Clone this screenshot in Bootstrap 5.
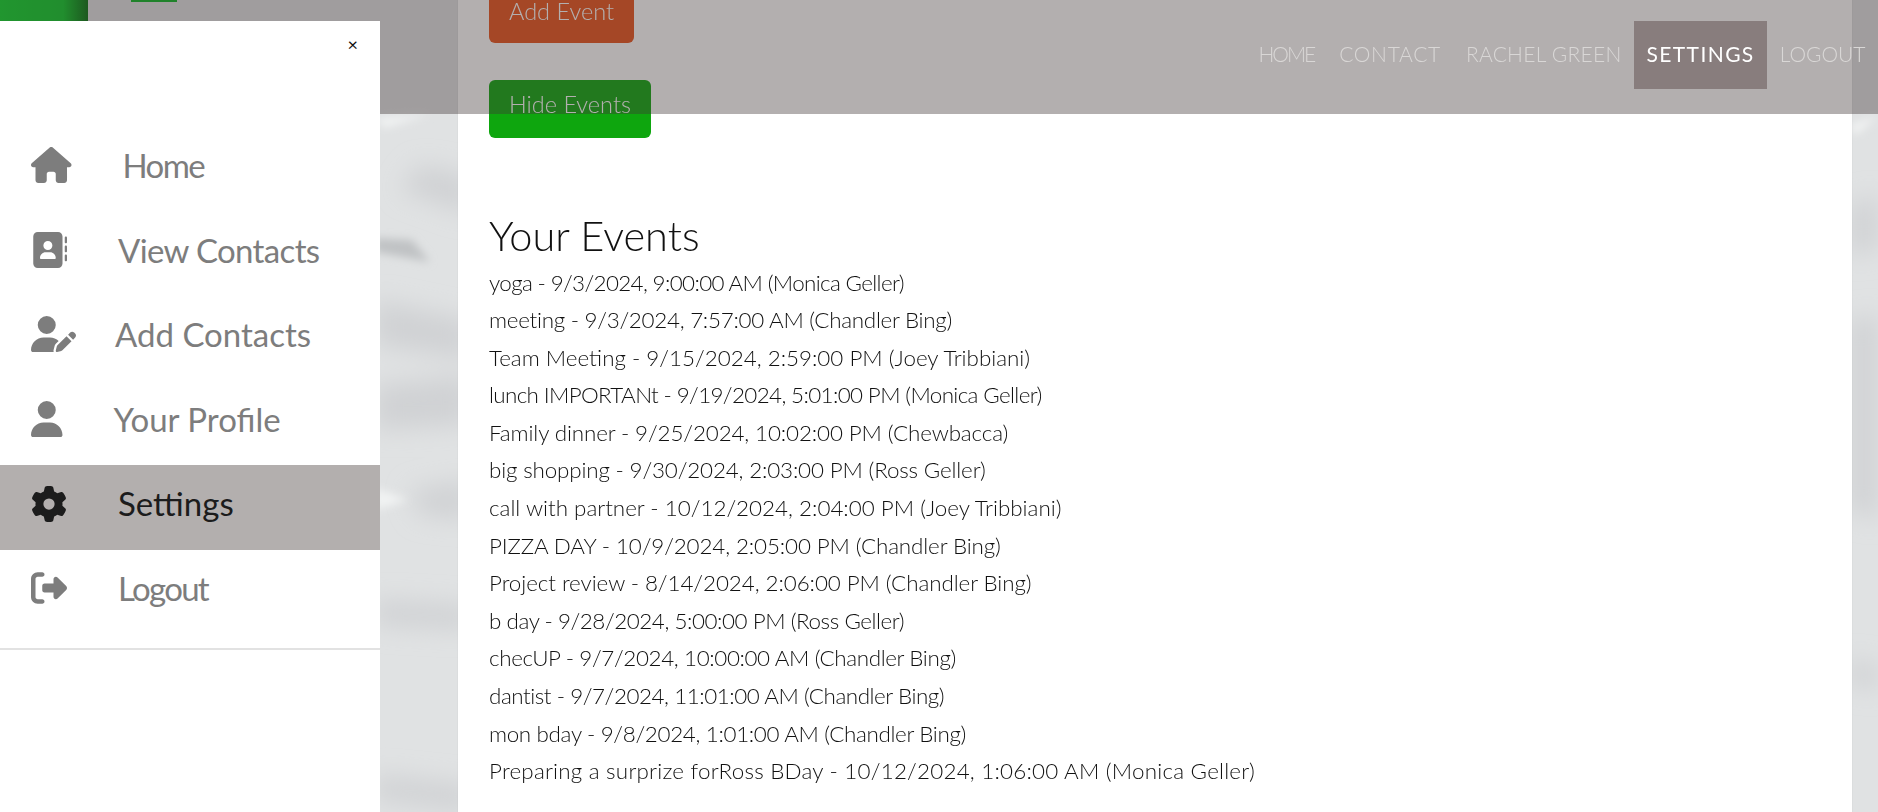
<!DOCTYPE html>
<html lang="en">
<head>
  <meta charset="UTF-8">
  <meta name="viewport" content="width=device-width, initial-scale=1.0">
  <title>Your Events</title>
  <link href="https://cdn.jsdelivr.net/npm/bootstrap@5.3.0/dist/css/bootstrap.min.css" rel="stylesheet">
  <style>
    html, body { height: 100%; overflow: hidden; }
    body {
      font-family: "Lato", "Liberation Sans", sans-serif;
      font-weight: 300;
      background: #e0e2e3;
      color: #111;
    }
    .paper { position: fixed; inset: 0; width: 100%; height: 100%; z-index: 0; }
    .green-patch { position: fixed; top: 0; z-index: 0; }
    .green-a { left: 0; width: 88px; height: 30px; background: linear-gradient(90deg, #0cd52a 0, #0cc828 72%, #067010 100%); }
    .green-b { left: 131px; width: 46px; height: 2px; background: #0bb524; }

    /* page column, scrolled a little */
    .page-col { position: relative; z-index: 1; margin-left: 458px; margin-right: 26px; margin-top: -15px; height: calc(100vh + 15px); overflow: hidden; background: #fff; padding: 0 31px; box-shadow: 0 0 1px rgba(0, 0, 0, .12); }
    .btn-add, .btn-hide { display: block; height: 58px; font-size: 23.5px; font-weight: 300; color: #fff; border: 0; border-radius: 6px; padding: 0 0 9px; }
    .btn-add { background: #e8531c; width: 145px; margin-bottom: 37px; padding-bottom: 5px; }
    .btn-hide { background: #0ea60e; width: 162px; }
    .btn-add:hover { background: #e8531c; color: #fff; }
    .btn-hide:hover { background: #0ea60e; color: #fff; }
    .events-title { font-size: 41.5px; font-weight: 300; line-height: 48px; margin: 73px 0 0; }
    .event-list { margin: 4.5px 0 0; padding: 0; list-style: none; }
    .event-list li { font-size: 22.4px; line-height: 37.6px; white-space: nowrap; }
    .event-list li:nth-child(1) { letter-spacing: -.64px; }
    .event-list li:nth-child(2) { letter-spacing: -.27px; }
    .event-list li:nth-child(4) { letter-spacing: -.63px; }
    .event-list li:nth-child(5) { letter-spacing: -.12px; }
    .event-list li:nth-child(6) { letter-spacing: -.16px; }
    .event-list li:nth-child(8) { letter-spacing: -.12px; }
    .event-list li:nth-child(9) { letter-spacing: -.07px; }
    .event-list li:nth-child(10) { letter-spacing: -.44px; }
    .event-list li:nth-child(11) { letter-spacing: -.37px; }
    .event-list li:nth-child(12) { letter-spacing: -.44px; }
    .event-list li:nth-child(13) { letter-spacing: -.33px; }
    .event-list li:nth-child(14) { letter-spacing: .22px; }

    /* top bar */
    .top-bar { position: fixed; top: 0; left: 0; right: 0; height: 114px; background: rgba(65, 55, 55, .4); z-index: 5; padding: 21px 0 0; justify-content: flex-end; align-items: flex-start; }
    .top-bar .nav-link { height: 68px; line-height: 66px; padding: 0 12.5px; font-size: 21px; color: #d9d7d6; text-transform: uppercase; white-space: nowrap; }
    .top-bar .nav-link.active { background: #887d7d; color: #fff; font-weight: 400; letter-spacing: 1.4px; }
    .top-bar .nav-home { letter-spacing: -2px; }
    .top-bar .nav-contact { letter-spacing: .7px; }
    .top-bar .nav-user { letter-spacing: .25px; }

    /* side menu */
    .side-menu { position: fixed; top: 21px; left: 0; bottom: 0; width: 380px; background: #fff; z-index: 10; }
    .side-close { position: absolute; top: 10px; right: 22px; font-size: 18px; line-height: 26px; color: #111; background: none; border: 0; padding: 0; font-weight: 400; }
    .side-items { padding-top: 106px; border-bottom: 2px solid #e2e2e2; padding-bottom: 13px; }
    .side-item { display: flex; height: 84.6px; align-items: center; padding-left: 31px; color: #7d7d7d; font-size: 33px; font-weight: 400; text-decoration: none; }
    .side-item svg { height: 36px; fill: currentColor; flex: none; margin-right: 51px; margin-top: -8px; }
    .side-item span { margin-top: -7px; }
    .side-item.current { background: #b3afae; color: #1c1c1c; }
    .side-item .ico-pen { margin-right: 39px; }
    .side-item .tight-home { letter-spacing: -1.6px; }
    .side-item .tight-view { letter-spacing: -.65px; }
    .side-item .tight-out { letter-spacing: -1.7px; }
  </style>
</head>
<body>
  <!-- crumpled paper behind the page -->
  <svg class="paper" xmlns="http://www.w3.org/2000/svg" viewBox="0 0 1878 812" preserveAspectRatio="none">
    <defs>
      <filter id="soft" x="-30%" y="-30%" width="160%" height="160%"><feGaussianBlur stdDeviation="12"/></filter>
      <filter id="softer" x="-30%" y="-30%" width="160%" height="160%"><feGaussianBlur stdDeviation="4"/></filter>
    </defs>
    <rect width="1878" height="812" fill="#e0e2e3"/>
    <g filter="url(#soft)" fill="#d0d2d4">
      <polygon points="420,165 470,175 470,215 400,190"/>
      <polygon points="375,300 470,320 470,360 375,345"/>
      <polygon points="375,385 470,375 470,425 375,430"/>
      <polygon points="410,490 470,480 470,520 420,515"/>
      <polygon points="375,600 470,605 470,630 375,625"/>
      <polygon points="375,775 470,785 470,812 375,800"/>
      <polygon points="1850,205 1878,195 1878,250 1850,255"/>
      <polygon points="1850,320 1878,315 1878,520 1850,510"/>
      <polygon points="1850,660 1878,665 1878,690 1850,685"/>
    </g>
    <g filter="url(#softer)">
      <polygon points="375,238 412,240 430,262 375,252" fill="#c0c2c4"/>
      <polygon points="375,488 408,500 375,510" fill="#f1f3f3"/>
      <polygon points="375,118 430,114 385,128" fill="#f1f3f3"/>
      <polygon points="1850,125 1878,116 1855,135" fill="#f3f4f4"/>
    </g>
  </svg>
  <div class="green-patch green-a"></div>
  <div class="green-patch green-b"></div>

  <div class="page-col">
    <button class="btn btn-add" type="button">Add Event</button>
    <button class="btn btn-hide" type="button">Hide Events</button>
    <h2 class="events-title">Your Events</h2>
    <ul class="event-list">
      <li>yoga - 9/3/2024, 9:00:00 AM (Monica Geller)</li>
      <li>meeting - 9/3/2024, 7:57:00 AM (Chandler Bing)</li>
      <li>Team Meeting - 9/15/2024, 2:59:00 PM (Joey Tribbiani)</li>
      <li>lunch IMPORTANt - 9/19/2024, 5:01:00 PM (Monica Geller)</li>
      <li>Family dinner - 9/25/2024, 10:02:00 PM (Chewbacca)</li>
      <li>big shopping - 9/30/2024, 2:03:00 PM (Ross Geller)</li>
      <li>call with partner - 10/12/2024, 2:04:00 PM (Joey Tribbiani)</li>
      <li>PIZZA DAY - 10/9/2024, 2:05:00 PM (Chandler Bing)</li>
      <li>Project review - 8/14/2024, 2:06:00 PM (Chandler Bing)</li>
      <li>b day - 9/28/2024, 5:00:00 PM (Ross Geller)</li>
      <li>checUP - 9/7/2024, 10:00:00 AM (Chandler Bing)</li>
      <li>dantist - 9/7/2024, 11:01:00 AM (Chandler Bing)</li>
      <li>mon bday - 9/8/2024, 1:01:00 AM (Chandler Bing)</li>
      <li>Preparing a surprize forRoss BDay - 10/12/2024, 1:06:00 AM (Monica Geller)</li>
    </ul>
  </div>

  <nav class="nav top-bar">
    <a class="nav-link nav-home" href="#">Home</a>
    <a class="nav-link nav-contact" href="#">Contact</a>
    <a class="nav-link nav-user" href="#">Rachel Green</a>
    <a class="nav-link active" href="#">Settings</a>
    <a class="nav-link" href="#">Logout</a>
  </nav>

  <aside class="side-menu">
    <button class="side-close" type="button">×</button>
    <div class="side-items">
      <a class="side-item" href="#">
        <svg viewBox="0 0 576 512"><path d="M575.8 255.5c0 18-15 32.1-32 32.1h-32l.7 160.2c0 2.7-.2 5.4-.5 8.1V472c0 22.1-17.9 40-40 40H456c-1.1 0-2.2 0-3.3-.1c-1.4 .1-2.8 .1-4.2 .1H416 392c-22.1 0-40-17.9-40-40V448 384c0-17.7-14.3-32-32-32H256c-17.7 0-32 14.3-32 32v64 24c0 22.1-17.9 40-40 40H160 128.1c-1.5 0-3-.1-4.5-.2c-1.2 .1-2.4 .2-3.6 .2H104c-22.1 0-40-17.9-40-40V360c0-.9 0-1.9 .1-2.8V287.6H32c-18 0-32-14-32-32.1c0-9 3-17 10-24L266.4 8c7-7 15-8 22-8s15 2 21 7L564.8 231.5c8 7 12 15 11 24z"/></svg>
        <span class="tight-home">Home</span>
      </a>
      <a class="side-item" href="#">
        <svg viewBox="0 0 512 512"><path d="M96 0C60.7 0 32 28.7 32 64V448c0 35.3 28.7 64 64 64H384c35.3 0 64-28.7 64-64V64c0-35.3-28.7-64-64-64H96zM208 288h64c44.2 0 80 35.8 80 80c0 8.8-7.2 16-16 16H144c-8.8 0-16-7.2-16-16c0-44.2 35.8-80 80-80zm-32-96a64 64 0 1 1 128 0 64 64 0 1 1 -128 0zM512 80c0-8.8-7.2-16-16-16s-16 7.2-16 16v64c0 8.8 7.2 16 16 16s16-7.2 16-16V80zM496 192c-8.8 0-16 7.2-16 16v64c0 8.8 7.2 16 16 16s16-7.2 16-16V208c0-8.8-7.2-16-16-16zm16 144c0-8.8-7.2-16-16-16s-16 7.2-16 16v64c0 8.8 7.2 16 16 16s16-7.2 16-16V336z"/></svg>
        <span class="tight-view">View Contacts</span>
      </a>
      <a class="side-item" href="#">
        <svg class="ico-pen" viewBox="0 0 640 512"><path d="M224 256A128 128 0 1 0 224 0a128 128 0 1 0 0 256zm-45.7 48C79.8 304 0 383.8 0 482.3C0 498.7 13.3 512 29.7 512H322.8c-3.1-8.8-3.7-18.4-1.4-27.8l15-60.1c2.8-11.3 8.6-21.5 16.8-29.7l40.3-40.3c-32.1-31-75.7-50.1-123.9-50.1H178.3zm435.5-68.3c-15.6-15.6-40.9-15.6-56.6 0l-29.4 29.4 71 71 29.4-29.4c15.6-15.6 15.6-40.9 0-56.6l-14.4-14.4zM375.9 417c-4.1 4.1-7 9.2-8.4 14.9l-15 60.1c-1.4 5.5 .2 11.2 4.2 15.2s9.7 5.6 15.2 4.2l60.1-15c5.6-1.4 10.8-4.3 14.9-8.4L576.1 358.7l-71-71L375.9 417z"/></svg>
        <span>Add Contacts</span>
      </a>
      <a class="side-item" href="#">
        <svg viewBox="0 0 448 512"><path d="M224 256A128 128 0 1 0 224 0a128 128 0 1 0 0 256zm-45.7 48C79.8 304 0 383.8 0 482.3C0 498.7 13.3 512 29.7 512H418.3c16.4 0 29.7-13.3 29.7-29.7C448 383.8 368.2 304 269.7 304H178.3z"/></svg>
        <span>Your Profile</span>
      </a>
      <a class="side-item current" href="#">
        <svg viewBox="0 0 512 512"><path d="M495.9 166.6c3.2 8.7 .5 18.4-6.4 24.6l-43.3 39.4c1.1 8.3 1.7 16.8 1.7 25.4s-.6 17.1-1.7 25.4l43.3 39.4c6.9 6.2 9.6 15.9 6.4 24.6c-4.4 11.9-9.7 23.3-15.8 34.3l-4.7 8.1c-6.6 11-14 21.4-22.1 31.2c-5.9 7.2-15.7 9.6-24.5 6.8l-55.7-17.7c-13.4 10.3-28.2 18.9-44 25.4l-12.5 57.1c-2 9.1-9 16.3-18.2 17.8c-13.8 2.3-28 3.5-42.5 3.5s-28.7-1.2-42.5-3.5c-9.2-1.5-16.2-8.7-18.2-17.8l-12.5-57.1c-15.8-6.5-30.6-15.1-44-25.4L83.1 425.9c-8.8 2.8-18.6 .3-24.5-6.8c-8.1-9.8-15.5-20.2-22.1-31.2l-4.7-8.1c-6.1-11-11.4-22.4-15.8-34.3c-3.2-8.7-.5-18.4 6.4-24.6l43.3-39.4C64.6 273.1 64 264.6 64 256s.6-17.1 1.7-25.4L22.4 191.2c-6.9-6.2-9.6-15.9-6.4-24.6c4.4-11.9 9.7-23.3 15.8-34.3l4.7-8.1c6.6-11 14-21.4 22.1-31.2c5.9-7.2 15.7-9.6 24.5-6.8l55.7 17.7c13.4-10.3 28.2-18.9 44-25.4l12.5-57.1c2-9.1 9-16.3 18.2-17.8C227.3 1.2 241.5 0 256 0s28.7 1.2 42.5 3.5c9.2 1.5 16.2 8.7 18.2 17.8l12.5 57.1c15.8 6.5 30.6 15.1 44 25.4l55.7-17.7c8.8-2.8 18.6-.3 24.5 6.8c8.1 9.8 15.5 20.2 22.1 31.2l4.7 8.1c6.1 11 11.4 22.4 15.8 34.3zM256 336a80 80 0 1 0 0-160 80 80 0 1 0 0 160z"/></svg>
        <span>Settings</span>
      </a>
      <a class="side-item" href="#">
        <svg viewBox="0 0 512 512"><path d="M377.9 105.9L500.7 228.7c7.2 7.2 11.3 17.1 11.3 27.3s-4.1 20.1-11.3 27.3L377.9 406.1c-6.4 6.4-15 9.9-24 9.9c-18.7 0-33.9-15.2-33.9-33.9l0-62.1-128 0c-17.7 0-32-14.3-32-32l0-64c0-17.7 14.3-32 32-32l128 0 0-62.1c0-18.7 15.2-33.9 33.9-33.9c9 0 17.6 3.5 24 9.9zM160 96L96 96c-17.7 0-32 14.3-32 32l0 256c0 17.7 14.3 32 32 32l64 0c17.7 0 32 14.3 32 32s-14.3 32-32 32l-64 0c-53 0-96-43-96-96L0 128C0 75 43 32 96 32l64 0c17.7 0 32 14.3 32 32s-14.3 32-32 32z"/></svg>
        <span class="tight-out">Logout</span>
      </a>
    </div>
  </aside>

  <script src="https://cdn.jsdelivr.net/npm/bootstrap@5.3.0/dist/js/bootstrap.bundle.min.js"></script>
</body>
</html>
